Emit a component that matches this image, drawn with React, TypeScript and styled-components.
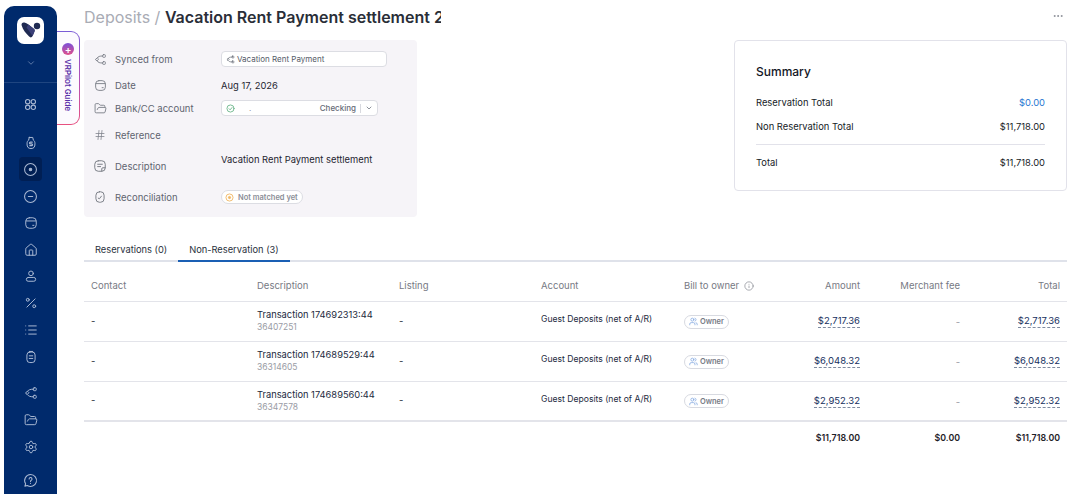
import React from 'react';
import styled, { createGlobalStyle } from 'styled-components';
import {
  ChevronDown,
  Ellipsis,
  FolderOpen,
  Hash,
  House,
  Info,
  List,
  Percent,
  Settings,
  Users,
} from 'lucide-react';

const GlobalStyle = createGlobalStyle`
  html, body { margin: 0; padding: 0; background: #fff; }
  body { font-family: Inter, "Liberation Sans", sans-serif; color: #1c2330; }
  * { box-sizing: border-box; }
`;

const Page = styled.div`
  position: relative;
  display: flex;
  width: 1072px;
  height: 494px;
  overflow: hidden;
  padding-left: 4px;
  padding-top: 6px;
`;

const Sidebar = styled.nav`
  flex: 0 0 53px;
  height: 488px;
  background: #002a6c;
  border-radius: 10px 10px 0 0;
  display: flex;
  flex-direction: column;
  align-items: center;
  padding-top: 11px;
  color: #a9b8d2;
`;

const LogoBox = styled.div`
  width: 27px;
  height: 27px;
  background: #fff;
  border-radius: 7px;
  display: flex;
  align-items: center;
  justify-content: center;
`;

const Collapse = styled.div`
  width: 100%;
  height: 39px;
  display: flex;
  align-items: center;
  justify-content: center;
  border-bottom: 1px solid #1f4580;
  color: #6f88b2;
`;

const NavGroup = styled.div<{ $top: number }>`
  margin-top: ${(p) => p.$top}px;
  display: flex;
  flex-direction: column;
  align-items: center;
`;

const NavItem = styled.div<{ $active?: boolean }>`
  width: 23px;
  height: 26.75px;
  display: flex;
  align-items: center;
  justify-content: center;
  position: relative;
  z-index: 0;
  &::before {
    content: '';
    display: ${(p) => (p.$active ? 'block' : 'none')};
    position: absolute;
    z-index: -1;
    left: 0;
    top: 1px;
    width: 23px;
    height: 24px;
    border-radius: 4px;
    background: #001f54;
  }
`;

const GuideTab = styled.div`
  position: absolute;
  left: 57px;
  top: 31px;
  width: 23px;
  height: 94px;
  padding: 1px 1px 1px 0;
  border-radius: 0 9px 9px 0;
  background: linear-gradient(180deg, #7a5bd6 0%, #b04fb8 50%, #e8507f 100%);
`;

const GuideInner = styled.div`
  width: 100%;
  height: 100%;
  background: #fcfafe;
  border-radius: 0 8px 8px 0;
  display: flex;
  flex-direction: column;
  align-items: center;
  padding-top: 11px;
  gap: 4px;
`;

const GuideDot = styled.div`
  width: 12px;
  height: 12px;
  border-radius: 50%;
  background: linear-gradient(180deg, #7a4fd8 0%, #e0508a 100%);
  color: #fff;
  font-size: 10px;
  line-height: 12px;
  text-align: center;
  font-weight: 600;
`;

const GuideText = styled.span`
  writing-mode: vertical-rl;
  font-size: 7.9px;
  font-weight: 600;
  color: #5a2fa8;
  white-space: nowrap;
`;

const Main = styled.main`
  flex: 1;
  margin-top: -6px;
  padding: 0 5px 0 27px;
  min-width: 0;
`;

const TitleRow = styled.header`
  height: 40px;
  display: flex;
  align-items: flex-start;
  justify-content: space-between;
  padding-top: 6px;
`;

const Title = styled.h1`
  margin: 0;
  width: 357px;
  overflow: hidden;
  white-space: nowrap;
  font-size: 16px;
  line-height: 22px;
  font-weight: 400;
  color: #a9acb5;
`;

const TitleStrong = styled.span`
  font-weight: 600;
  color: #2a2e38;
`;

const MoreButton = styled.div`
  display: flex;
  height: 20px;
  align-items: center;
  padding-right: 3px;
  color: #8a8d96;
`;

const TopRow = styled.section`
  display: flex;
  justify-content: space-between;
  align-items: flex-start;
`;

const DetailPanel = styled.div`
  width: 333px;
  height: 177px;
  background: #f6f4f8;
  border-radius: 4px;
  padding-top: 8px;
`;

const DetailRow = styled.div<{ $h: number }>`
  height: ${(p) => p.$h}px;
  display: grid;
  grid-template-columns: 31px 106px 1fr;
  align-items: center;
  font-size: 9.5px;
`;

const DetailIcon = styled.div`
  display: flex;
  justify-content: center;
  padding-left: 1px;
  color: #7b7f88;
`;

const DetailLabel = styled.span`
  color: #5f6470;
`;

const DetailValue = styled.span<{ $lift?: number }>`
  color: #1f2530;
  font-size: 9.4px;
  transform: translateY(${(p) => -(p.$lift ?? 0)}px);
`;

const FieldBox = styled.div<{ $w: number }>`
  width: ${(p) => p.$w}px;
  height: 16px;
  background: #fff;
  border: 1px solid #dcdde3;
  border-radius: 4px;
  display: flex;
  align-items: center;
  padding: 0 4px;
  gap: 2px;
  font-size: 8px;
  color: #555b68;
`;

const Spacer = styled.span`
  flex: 1;
  padding-left: 12px;
  color: #8a8d96;
`;

const FieldSuffix = styled.span`
  font-weight: 500;
  color: #666b76;
`;

const FieldDivider = styled.span`
  width: 1px;
  height: 9px;
  margin: 0 2px;
  background: #d8d9df;
`;

const StatusPill = styled.div`
  display: inline-flex;
  align-items: center;
  gap: 4px;
  width: 82px;
  height: 14px;
  padding: 0 3px;
  background: #fff;
  border: 1px solid #dcdde3;
  border-radius: 7px;
  font-size: 7.5px;
  font-weight: 600;
  color: #8b8e97;
  white-space: nowrap;
`;

const SummaryCard = styled.aside`
  width: 333px;
  height: 151px;
  background: #fff;
  border: 1px solid #e2e2ea;
  border-radius: 4px;
  padding: 23px 21px 0;
`;

const SummaryTitle = styled.h2`
  margin: 0 0 11px;
  font-size: 12px;
  line-height: 15px;
  font-weight: 500;
  color: #14171f;
`;

const SummaryRow = styled.div`
  display: flex;
  justify-content: space-between;
  height: 24px;
  align-items: center;
  font-size: 9.4px;
  color: #171c27;
`;

const SummaryRule = styled.hr`
  margin: 6px 0 5px;
  border: 0;
  border-top: 1px solid #e2e2ea;
`;

const BlueAmount = styled.span`
  color: #2a78d2;
`;

const Tabs = styled.div`
  display: flex;
  margin-top: 24px;
  height: 21px;
  border-bottom: 2px solid #dfe2ea;
`;

const Tab = styled.div<{ $active?: boolean }>`
  padding: 0 11px 2px;
  height: 21px;
  display: flex;
  align-items: center;
  font-size: 9.3px;
  color: #2b3240;
  border-bottom: 2px solid ${(p) => (p.$active ? '#1a5fb4' : 'transparent')};
`;

const TableRow = styled.div<{ $h: number; $top?: number; $heavy?: boolean; $plain?: boolean }>`
  display: grid;
  grid-template-columns: 166px 142px 142px 143px 100px 90px 100px 100px;
  height: ${(p) => p.$h}px;
  padding-top: ${(p) => p.$top ?? 0}px;
  align-items: center;
  font-size: 9.5px;
  border-bottom: ${(p) => (p.$plain ? '0' : p.$heavy ? '2px' : '1px')} solid #e3e4ea;
`;

const HeadCell = styled.div<{ $right?: boolean }>`
  display: flex;
  align-items: center;
  gap: 5px;
  justify-content: ${(p) => (p.$right ? 'flex-end' : 'flex-start')};
  padding: 0 7px;
  color: #777a84;
`;

const Cell = styled.div<{ $right?: boolean; $muted?: boolean; $lift?: number }>`
  padding: 0 7px ${(p) => p.$lift ?? 0}px;
  text-align: ${(p) => (p.$right ? 'right' : 'left')};
  color: ${(p) => (p.$muted ? '#9a9ca5' : '#2b3240')};
`;

const AccountCell = styled(Cell)`
  font-size: 8.6px;
  color: #1c2a40;
`;

const TotalCell = styled(Cell)`
  font-weight: 600;
  font-size: 8.8px;
  color: #1e2128;
`;

const TxName = styled.div`
  color: #1c2a40;
  font-size: 9.3px;
  line-height: 13px;
`;

const TxId = styled.div`
  color: #9a9ca5;
  font-size: 8.5px;
  line-height: 13px;
`;

const Money = styled.span`
  color: #16305e;
  font-size: 9.5px;
  padding-bottom: 1px;
  border-bottom: 1px dashed #7e8ba0;
`;

const OwnerPill = styled.span`
  display: inline-flex;
  align-items: center;
  gap: 2px;
  height: 14px;
  width: 45px;
  padding: 0 4px;
  border: 1px solid #d8dae1;
  border-radius: 7px;
  font-size: 7.5px;
  font-weight: 600;
  color: #767a85;
`;

const OwnerIcon = styled(Users)`
  color: #7ea4df;
`;

const stroke = {
  fill: 'none',
  stroke: 'currentColor',
  strokeWidth: 1.7,
  strokeLinecap: 'round' as const,
  strokeLinejoin: 'round' as const,
};

const Svg = ({ size = 14, children }: { size?: number; children: React.ReactNode }) => (
  <svg width={size} height={size} viewBox="0 0 24 24" {...stroke}>
    {children}
  </svg>
);

const Logo = () => (
  <svg width="20" height="16" viewBox="0 0 20 16">
    <path
      d="M.6 3.300C.2 1.400 1.600.1 3.400.5c1.300.3 2.700 1 4 2L12.500 6.500c1.300 1 1.500 2 .9 3.200l-1.800 4.300c-.7 1.700-2.400 1.800-3.500.6C5 11.500 1.800 7.800.6 3.300Z"
      fill="#1f2a52"
    />
    <path d="M7.400 2.500 12.500 6.500c1.300 1 1.500 2 .9 3.200l-1.800 4.300L5.500 5.500Z" fill="#3a3f78" />
    <circle cx="16" cy="4" r="3.200" fill="#1f2a52" />
  </svg>
);

const DotsIcon = () => (
  <Svg size={15}>
    <circle cx="7.500" cy="7.500" r="3.500" />
    <circle cx="16.500" cy="7.500" r="3.500" />
    <circle cx="7.500" cy="16.500" r="3.500" />
    <circle cx="16.500" cy="16.500" r="3.500" />
  </Svg>
);

const BagIcon = () => (
  <Svg>
    <path d="M9 2.500h6l1 4.500c2 1.200 2.800 3.200 2.800 6.500 0 5.500-2 8-6.800 8s-6.800-2.500-6.800-8c0-3.300.8-5.300 2.800-6.500l1-4.500Z" />
    <path d="M14 10.500h-3a1.300 1.300 0 0 0 0 3h2a1.300 1.300 0 0 1 0 3h-3" strokeWidth="2.200" />
  </Svg>
);

const DotCircleIcon = () => (
  <Svg size={15}>
    <circle cx="12" cy="12" r="9.500" />
    <circle cx="12" cy="12" r="2" fill="currentColor" />
  </Svg>
);

const MinusCircleIcon = () => (
  <Svg size={15}>
    <circle cx="12" cy="12" r="9.500" />
    <path d="M8.500 12h7" />
  </Svg>
);

const CalendarIcon = ({ size = 14 }: { size?: number }) => (
  <Svg size={size}>
    <rect x="3" y="3" width="18" height="18" rx="6" />
    <path d="M3.500 8.500h17" />
    <path d="M15 16h2" />
  </Svg>
);

const PersonIcon = () => (
  <Svg>
    <circle cx="12" cy="7.500" r="4" />
    <rect x="4" y="14.500" width="16" height="6.500" rx="3.200" />
  </Svg>
);

const ClipboardIcon = () => (
  <Svg>
    <rect x="5" y="3.500" width="14" height="18" rx="5" />
    <path d="M9 2.500h6M9 10h6M9 14.500h6" />
  </Svg>
);

const SourcesIcon = ({ size = 14 }: { size?: number }) => (
  <Svg size={size}>
    <path d="M5.500 9.500 2.500 12l3 2.500L8 12Z" />
    <rect x="16" y="3" width="5" height="5" rx="1.500" />
    <rect x="16" y="16" width="5" height="5" rx="1.500" />
    <path d="M6 9c2-2.500 4-3.500 10-3.500M6 15c2 2.500 4 3.500 10 3.500" />
  </Svg>
);

const HelpIcon = () => (
  <Svg size={15}>
    <path d="M12 2.500a9.500 9.500 0 1 1-5 17.500L3 21l1.200-3.800A9.500 9.500 0 0 1 12 2.500Z" />
    <path d="M9.800 9.500a2.300 2.300 0 1 1 3.400 2c-.8.500-1.200 1-1.200 2" />
    <path d="M12 16.500v.2" />
  </Svg>
);

const NoteIcon = () => (
  <Svg>
    <rect x="3" y="3" width="18" height="18" rx="6" />
    <path d="M8 9h8M8 13h5" />
    <path d="M15 21v-4a2 2 0 0 1 2-2h4" />
  </Svg>
);

const ClockBadgeIcon = () => (
  <Svg>
    <rect x="5" y="3" width="14" height="18" rx="6" />
    <path d="M14.500 10.500 11 15l-2-1" />
  </Svg>
);

const CheckCircleIcon = () => (
  <svg width="9" height="9" viewBox="0 0 24 24" fill="none" stroke="#6bb58a" strokeWidth="2.400" strokeLinecap="round" strokeLinejoin="round">
    <circle cx="12" cy="12" r="9.500" />
    <path d="M8 12.500l3 3 5-6" />
  </svg>
);

const PendingIcon = () => (
  <svg width="9" height="9" viewBox="0 0 24 24" fill="none" stroke="#f0b763" strokeWidth="2.400">
    <circle cx="12" cy="12" r="9.500" />
    <circle cx="12" cy="12" r="3" fill="#f0b763" />
  </svg>
);

const transactions = [
  { name: 'Transaction 174692313:44', id: '36407251', amount: '$2,717.36' },
  { name: 'Transaction 174689529:44', id: '36314605', amount: '$6,048.32' },
  { name: 'Transaction 174689560:44', id: '36347578', amount: '$2,952.32' },
];

const App = () => (
  <Page>
    <GlobalStyle />
    <Sidebar>
      <LogoBox>
        <Logo />
      </LogoBox>
      <Collapse>
        <ChevronDown size={10} />
      </Collapse>
      <NavGroup $top={9}>
        <NavItem>
          <DotsIcon />
        </NavItem>
      </NavGroup>
      <NavGroup $top={11}>
        <NavItem>
          <BagIcon />
        </NavItem>
        <NavItem $active>
          <DotCircleIcon />
        </NavItem>
        <NavItem>
          <MinusCircleIcon />
        </NavItem>
        <NavItem>
          <CalendarIcon />
        </NavItem>
        <NavItem>
          <House size={14} strokeWidth={1.700} />
        </NavItem>
        <NavItem>
          <PersonIcon />
        </NavItem>
        <NavItem>
          <Percent size={14} strokeWidth={1.700} />
        </NavItem>
        <NavItem>
          <List size={14} strokeWidth={1.700} />
        </NavItem>
        <NavItem>
          <ClipboardIcon />
        </NavItem>
      </NavGroup>
      <NavGroup $top={10}>
        <NavItem>
          <SourcesIcon />
        </NavItem>
        <NavItem>
          <FolderOpen size={14} strokeWidth={1.700} />
        </NavItem>
        <NavItem>
          <Settings size={14} strokeWidth={1.700} />
        </NavItem>
      </NavGroup>
      <NavGroup $top={7}>
        <NavItem>
          <HelpIcon />
        </NavItem>
      </NavGroup>
    </Sidebar>

    <GuideTab>
      <GuideInner>
        <GuideDot>+</GuideDot>
        <GuideText>VRPilot Guide</GuideText>
      </GuideInner>
    </GuideTab>

    <Main>
      <TitleRow>
        <Title>
          Deposits / <TitleStrong>Vacation Rent Payment settlement 2026</TitleStrong>
        </Title>
        <MoreButton>
          <Ellipsis size={12} />
        </MoreButton>
      </TitleRow>

      <TopRow>
        <DetailPanel>
          <DetailRow $h={22}>
            <DetailIcon>
              <SourcesIcon size={13} />
            </DetailIcon>
            <DetailLabel>Synced from</DetailLabel>
            <FieldBox $w={166}>
              <SourcesIcon size={9} />
              <span>Vacation Rent Payment</span>
            </FieldBox>
          </DetailRow>
          <DetailRow $h={30}>
            <DetailIcon>
              <CalendarIcon size={13} />
            </DetailIcon>
            <DetailLabel>Date</DetailLabel>
            <DetailValue>Aug 17, 2026</DetailValue>
          </DetailRow>
          <DetailRow $h={16}>
            <DetailIcon>
              <FolderOpen size={13} strokeWidth={1.700} />
            </DetailIcon>
            <DetailLabel>Bank/CC account</DetailLabel>
            <FieldBox $w={157}>
              <CheckCircleIcon />
              <Spacer>.</Spacer>
              <FieldSuffix>Checking</FieldSuffix>
              <FieldDivider />
              <ChevronDown size={8} />
            </FieldBox>
          </DetailRow>
          <DetailRow $h={38}>
            <DetailIcon>
              <Hash size={12} strokeWidth={1.500} />
            </DetailIcon>
            <DetailLabel>Reference</DetailLabel>
          </DetailRow>
          <DetailRow $h={24}>
            <DetailIcon>
              <NoteIcon />
            </DetailIcon>
            <DetailLabel>Description</DetailLabel>
            <DetailValue $lift={7}>Vacation Rent Payment settlement</DetailValue>
          </DetailRow>
          <DetailRow $h={38}>
            <DetailIcon>
              <ClockBadgeIcon />
            </DetailIcon>
            <DetailLabel>Reconciliation</DetailLabel>
            <StatusPill>
              <PendingIcon />
              Not matched yet
            </StatusPill>
          </DetailRow>
        </DetailPanel>

        <SummaryCard>
          <SummaryTitle>Summary</SummaryTitle>
          <SummaryRow>
            <span>Reservation Total</span>
            <BlueAmount>$0.00</BlueAmount>
          </SummaryRow>
          <SummaryRow>
            <span>Non Reservation Total</span>
            <span>$11,718.00</span>
          </SummaryRow>
          <SummaryRule />
          <SummaryRow>
            <span>Total</span>
            <span>$11,718.00</span>
          </SummaryRow>
        </SummaryCard>
      </TopRow>

      <Tabs>
        <Tab>Reservations (0)</Tab>
        <Tab $active>Non-Reservation (3)</Tab>
      </Tabs>

      <TableRow $h={40} $top={8}>
        <HeadCell>Contact</HeadCell>
        <HeadCell>Description</HeadCell>
        <HeadCell>Listing</HeadCell>
        <HeadCell>Account</HeadCell>
        <HeadCell>
          Bill to owner <Info size={10} strokeWidth={1.500} />
        </HeadCell>
        <HeadCell $right>Amount</HeadCell>
        <HeadCell $right>Merchant fee</HeadCell>
        <HeadCell $right>Total</HeadCell>
      </TableRow>
      {transactions.map((tx, i) => (
        <TableRow key={tx.id} $h={40} $heavy={i === transactions.length - 1}>
          <Cell $lift={3}>-</Cell>
          <Cell $lift={1}>
            <TxName>{tx.name}</TxName>
            <TxId>{tx.id}</TxId>
          </Cell>
          <Cell $lift={3}>-</Cell>
          <AccountCell $lift={5}>Guest Deposits (net of A/R)</AccountCell>
          <Cell>
            <OwnerPill>
              <OwnerIcon size={9} />
              Owner
            </OwnerPill>
          </Cell>
          <Cell $right $lift={2}>
            <Money>{tx.amount}</Money>
          </Cell>
          <Cell $right $muted>
            -
          </Cell>
          <Cell $right $lift={2}>
            <Money>{tx.amount}</Money>
          </Cell>
        </TableRow>
      ))}
      <TableRow $h={30} $plain>
        <span />
        <span />
        <span />
        <span />
        <span />
        <TotalCell $right>$11,718.00</TotalCell>
        <TotalCell $right>$0.00</TotalCell>
        <TotalCell $right>$11,718.00</TotalCell>
      </TableRow>
    </Main>
  </Page>
);

export default App;
